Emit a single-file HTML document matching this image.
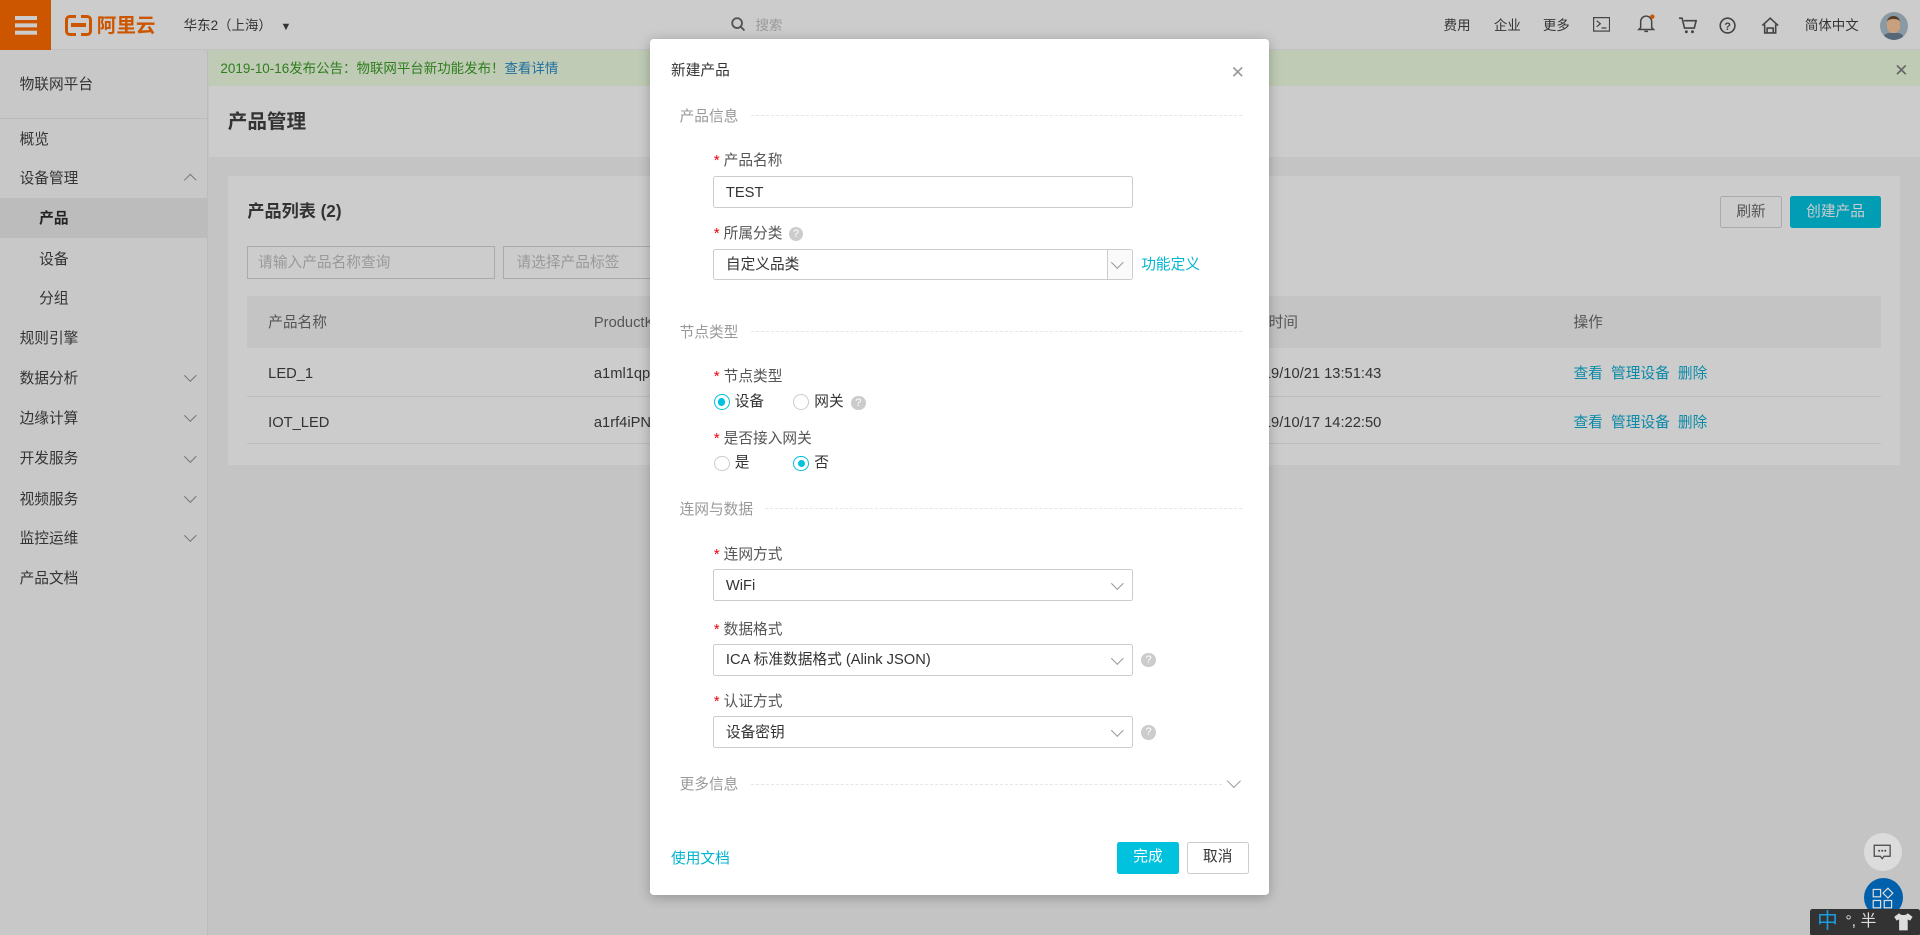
<!DOCTYPE html>
<html><head><meta charset="utf-8"><style>
*{box-sizing:border-box;margin:0;padding:0}
html,body{width:1920px;height:935px;overflow:hidden;background:#c4c4c4}
#w{zoom:1.2245;width:1568px;height:764px;position:relative;font-family:"Liberation Sans","Noto Sans CJK SC",sans-serif;font-size:12px;line-height:17px;color:#333}
.a{position:absolute;white-space:nowrap}
.top{left:0;top:0;width:1568px;height:41px;background:#cccccc;border-bottom:1px solid #c0c0c0}
.side{left:0;top:41px;width:170px;height:723px;background:#c8c8c8;border-right:1px solid #bcbcbc}
.chev{position:absolute;left:152px;width:7px;height:7px;border-right:1px solid #777;border-bottom:1px solid #777;transform:rotate(45deg)}
.lbl{color:#555}
.lbl:before{content:"* ";color:#e00}
.inp{position:absolute;border:1px solid #ccc;border-radius:2px;background:#fff;height:26px;line-height:14px;padding:6px 0 0 10px;color:#333;font-size:12px}
.dd{position:absolute;right:8px;top:7px;width:7px;height:7px;border-right:1px solid #999;border-bottom:1px solid #999;transform:rotate(45deg)}
.sec{color:#999}
.dash{position:absolute;height:0;border-top:1px dashed #e6e6e6}
.q{position:absolute;width:12px;height:12px;border-radius:50%;background:#ccc;color:#fff;font-size:9px;text-align:center;line-height:12px}
.rad{position:absolute;width:13px;height:13px;border-radius:50%;border:1px solid #ccc;background:#fff}
.rad.on{border-color:#00c1de}
.rad.on:after{content:"";position:absolute;left:2.5px;top:2.5px;width:6px;height:6px;border-radius:50%;background:#00c1de}
.lk{color:#0a8aa8}
</style></head><body><div id="w">
<div class="a top"></div>
<div class="a" style="left:0;top:0;width:42px;height:41px;background:#cc5500"></div>
<div class="a" style="left:12px;top:13px;width:18px;height:3px;background:#ccc;box-shadow:0 6px 0 #ccc,0 12px 0 #ccc"></div>
<div class="a" style="left:53px;top:12px;width:22px;height:17px;border:3px solid #cc5500;border-radius:4px"></div>
<div class="a" style="left:58px;top:19px;width:12px;height:3px;background:#cc5500"></div>
<div class="a" style="left:62px;top:8px;width:4px;height:26px;background:#ccc"></div>
<div class="a" style="left:62px;top:19px;width:6px;height:3px;background:#cc5500"></div>
<div class="a" style="left:79px;top:12px;font-size:16px;line-height:18px;font-weight:bold;color:#cc5500">阿里云</div>
<div class="a" style="left:150px;top:14px;font-size:11px;line-height:14px">华东2（上海） <span style="font-size:9px;margin-left:4px">▼</span></div>
<svg class="a" style="left:597px;top:14px" width="12" height="12"><circle cx="5" cy="5" r="4" stroke="#555" stroke-width="1.5" fill="none"/><path d="M8 8l3 3" stroke="#555" stroke-width="1.5"/></svg>
<div class="a" style="left:617px;top:14px;color:#999;font-size:11px;line-height:14px">搜索</div>
<div class="a" style="left:1179px;top:14px;font-size:11px;line-height:14px">费用</div>
<div class="a" style="left:1220px;top:14px;font-size:11px;line-height:14px">企业</div>
<div class="a" style="left:1260px;top:14px;font-size:11px;line-height:14px">更多</div>
<svg class="a" style="left:1301px;top:14px" width="14" height="12"><rect x="0.5" y="0.5" width="13" height="11" fill="none" stroke="#444"/><path d="M3 3l3 2.5-3 2.5M7 9h4" stroke="#444" fill="none"/></svg>
<svg class="a" style="left:1337px;top:11px" width="16" height="17"><path d="M3 12V7a4.5 4.5 0 019 0v5l1.5 1.5h-12z M6 15h3" stroke="#444" fill="none" stroke-width="1.2"/><circle cx="12.5" cy="3" r="1.8" fill="#cc5500"/></svg>
<svg class="a" style="left:1371px;top:14px" width="15" height="14"><path d="M0 1h2.5l2 8h8l1.5-6H4" stroke="#444" fill="none" stroke-width="1.3"/><circle cx="6" cy="12" r="1.2" fill="#444"/><circle cx="11" cy="12" r="1.2" fill="#444"/></svg>
<svg class="a" style="left:1404px;top:14px" width="14" height="14"><circle cx="7" cy="7" r="6" stroke="#444" fill="none" stroke-width="1.3"/><text x="7" y="10.5" font-size="9" text-anchor="middle" fill="#444" font-family="Liberation Sans" font-weight="bold">?</text></svg>
<svg class="a" style="left:1438px;top:14px" width="15" height="14"><path d="M1 7L7.5 1 14 7M3 6v7h9V6M5 13V9h5v4" stroke="#444" fill="none" stroke-width="1.3"/></svg>
<div class="a" style="left:1474px;top:14px;font-size:11px;line-height:14px">简体中文</div>
<div class="a" style="left:1535px;top:10px;width:23px;height:23px;border-radius:50%;background:#8a9aa4;overflow:hidden"><div style="position:absolute;left:6px;top:3px;width:11px;height:14px;border-radius:5px;background:#c9a07e;border-top:3px solid #5a3e2b"></div><div style="position:absolute;left:3px;top:17px;width:17px;height:8px;background:#56677a;border-radius:5px 5px 0 0"></div></div>

<div class="a side"></div>
<div class="a" style="left:16px;top:61px">物联网平台</div>
<div class="a" style="left:0;top:96px;width:170px;height:1px;background:#bbb"></div>
<div class="a" style="left:16px;top:106px">概览</div>
<div class="a" style="left:16px;top:138px">设备管理</div><div class="chev" style="top:144px;transform:rotate(225deg)"></div>
<div class="a" style="left:0;top:162px;width:170px;height:32px;background:#bcbcbc"></div>
<div class="a" style="left:32px;top:171px;font-weight:bold;color:#222">产品</div>
<div class="a" style="left:32px;top:204px">设备</div>
<div class="a" style="left:32px;top:236px">分组</div>
<div class="a" style="left:16px;top:269px">规则引擎</div>
<div class="a" style="left:16px;top:301px">数据分析</div><div class="chev" style="top:303px"></div>
<div class="a" style="left:16px;top:334px">边缘计算</div><div class="chev" style="top:336px"></div>
<div class="a" style="left:16px;top:367px">开发服务</div><div class="chev" style="top:369px"></div>
<div class="a" style="left:16px;top:400px">视频服务</div><div class="chev" style="top:402px"></div>
<div class="a" style="left:16px;top:432px">监控运维</div><div class="chev" style="top:434px"></div>
<div class="a" style="left:16px;top:465px">产品文档</div>

<div class="a" style="left:171px;top:41px;width:1397px;height:29px;background:#bfcbb5"></div>
<div class="a" style="left:180px;top:49px;color:#2f7d1e;font-size:11px;line-height:15px">2019-10-16发布公告：物联网平台新功能发布！<span style="color:#1f6fa0">查看详情</span></div>
<div class="a" style="left:1547px;top:49px;color:#666;font-size:14px">✕</div>
<div class="a" style="left:171px;top:70px;width:1397px;height:58px;background:#cccccc"></div>
<div class="a" style="left:186px;top:90px;font-size:16px;line-height:20px;font-weight:bold">产品管理</div>

<div class="a" style="left:186px;top:144px;width:1366px;height:236px;background:#cccccc"></div>
<div class="a" style="left:202px;top:165px;font-size:14px;line-height:16px;font-weight:bold">产品列表 (2)</div>
<div class="a" style="left:1405px;top:160px;width:50px;height:26px;border:1px solid #aaa;border-radius:2px;text-align:center;padding-top:4px;color:#555">刷新</div>
<div class="a" style="left:1462px;top:160px;width:74px;height:26px;background:#009db4;border-radius:2px;text-align:center;padding-top:5px;color:#ccc">创建产品</div>
<div class="a" style="left:202px;top:201px;width:202px;height:27px;border:1px solid #aaa;color:#999;padding:5px 8px">请输入产品名称查询</div>
<div class="a" style="left:411px;top:201px;width:202px;height:27px;border:1px solid #aaa;color:#999;padding:5px 10px">请选择产品标签</div>
<div class="a" style="left:202px;top:242px;width:1334px;height:42px;background:#c4c4c4"></div>
<div class="a" style="left:202px;top:323px;width:1334px;height:1px;background:#bdbdbd"></div>
<div class="a" style="left:202px;top:362px;width:1334px;height:1px;background:#bdbdbd"></div>
<div class="a" style="left:219px;top:256px;color:#555">产品名称</div>
<div class="a" style="left:485px;top:256px;color:#555">ProductKey</div>
<div class="a" style="left:1012px;top:256px;color:#555">添加时间</div>
<div class="a" style="left:1285px;top:256px;color:#555">操作</div>
<div class="a" style="left:219px;top:297px">LED_1</div>
<div class="a" style="left:485px;top:297px">a1ml1qpYxxx</div>
<div class="a" style="left:1018px;top:297px">2019/10/21 13:51:43</div>
<div class="a lk" style="left:1285px;top:297px">查看 &nbsp;管理设备 &nbsp;删除</div>
<div class="a" style="left:219px;top:337px">IOT_LED</div>
<div class="a" style="left:485px;top:337px">a1rf4iPNxxx</div>
<div class="a" style="left:1018px;top:337px">2019/10/17 14:22:50</div>
<div class="a lk" style="left:1285px;top:337px">查看 &nbsp;管理设备 &nbsp;删除</div>

<div class="a" style="left:1522px;top:680px;width:31px;height:31px;border-radius:50%;background:#dcdcdc"></div>
<svg class="a" style="left:1530px;top:689px" width="15" height="13"><path d="M1 1h13v9H9l-1.5 2L6 10H1z" stroke="#444" fill="none"/><circle cx="5" cy="5.5" r=".8" fill="#444"/><circle cx="7.5" cy="5.5" r=".8" fill="#444"/><circle cx="10" cy="5.5" r=".8" fill="#444"/></svg>
<div class="a" style="left:1522px;top:717px;width:32px;height:32px;border-radius:50%;background:#0060ab"></div>
<svg class="a" style="left:1529px;top:724px" width="18" height="18"><rect x="1" y="2" width="6" height="6" fill="none" stroke="#ddd"/><path d="M13 1l4 4-4 4-4-4z" fill="none" stroke="#ddd"/><rect x="1" y="11" width="6" height="6" fill="none" stroke="#ddd"/><rect x="10" y="11" width="6" height="6" fill="none" stroke="#ddd"/></svg>
<div class="a" style="left:1478px;top:742px;width:90px;height:22px;background:#333;border-radius:2px"></div>
<div class="a" style="left:1484px;top:742px;color:#1a9de0;font-size:17px;line-height:22px">中</div>
<div class="a" style="left:1507px;top:742px;color:#ddd;font-size:13px;line-height:22px">°, 半</div>
<svg class="a" style="left:1546px;top:745px" width="17" height="16"><path d="M5 1l-4 3 2 3 2-1v9h7V6l2 1 2-3-4-3c-1 2-6 2-7 0z" fill="#ddd"/></svg>

<div class="a" style="left:531px;top:32px;width:505px;height:699px;background:#fff;border-radius:3px;box-shadow:0 2px 10px rgba(0,0,0,.25)"></div>
<div class="a" style="left:548px;top:50px;font-size:12px;color:#333">新建产品</div>
<div class="a" style="left:1005px;top:51px;color:#999;font-size:14px">✕</div>
<div class="a sec" style="left:555px;top:87px">产品信息</div><div class="dash" style="left:613px;top:94px;width:401px"></div>
<div class="a lbl" style="left:583px;top:123px">产品名称</div>
<div class="inp" style="left:582px;top:144px;width:343px">TEST</div>
<div class="a lbl" style="left:583px;top:183px">所属分类</div><div class="q" style="left:644px;top:185px">?</div>
<div class="inp" style="left:582px;top:203px;width:343px">自定义品类<div style="position:absolute;left:321px;top:0;width:20px;height:24px;border-left:1px solid #ccc;background:#fafafa"></div><div class="dd"></div></div>
<div class="a" style="left:932px;top:208px;color:#00b4d0">功能定义</div>
<div class="a sec" style="left:555px;top:264px">节点类型</div><div class="dash" style="left:613px;top:270px;width:401px"></div>
<div class="a lbl" style="left:583px;top:300px">节点类型</div>
<div class="rad on" style="left:583px;top:322px"></div><div class="a" style="left:600px;top:320px">设备</div>
<div class="rad" style="left:648px;top:322px"></div><div class="a" style="left:665px;top:320px">网关</div><div class="q" style="left:695px;top:323px">?</div>
<div class="a lbl" style="left:583px;top:350px">是否接入网关</div>
<div class="rad" style="left:583px;top:372px"></div><div class="a" style="left:600px;top:370px">是</div>
<div class="rad on" style="left:648px;top:372px"></div><div class="a" style="left:665px;top:370px">否</div>
<div class="a sec" style="left:555px;top:408px">连网与数据</div><div class="dash" style="left:625px;top:415px;width:389px"></div>
<div class="a lbl" style="left:583px;top:445px">连网方式</div>
<div class="inp" style="left:582px;top:465px;width:343px">WiFi<div class="dd"></div></div>
<div class="a lbl" style="left:583px;top:506px">数据格式</div>
<div class="inp" style="left:582px;top:526px;width:343px">ICA 标准数据格式 (Alink JSON)<div class="dd"></div></div><div class="q" style="left:932px;top:533px">?</div>
<div class="a lbl" style="left:583px;top:565px">认证方式</div>
<div class="inp" style="left:582px;top:585px;width:343px">设备密钥<div class="dd"></div></div><div class="q" style="left:932px;top:592px">?</div>
<div class="a sec" style="left:555px;top:633px">更多信息</div><div class="dash" style="left:613px;top:640px;width:385px"></div>
<div class="a" style="left:1004px;top:634px;width:8px;height:8px;border-right:1px solid #999;border-bottom:1px solid #999;transform:rotate(45deg)"></div>
<div class="a" style="left:548px;top:693px;color:#00b4d0">使用文档</div>
<div class="a" style="left:912px;top:688px;width:51px;height:26px;background:#00c1de;color:#fff;text-align:center;padding-top:4px;border-radius:2px">完成</div>
<div class="a" style="left:969px;top:688px;width:51px;height:26px;border:1px solid #ccc;color:#333;text-align:center;padding-top:3px;border-radius:2px">取消</div>
</div></body></html>
